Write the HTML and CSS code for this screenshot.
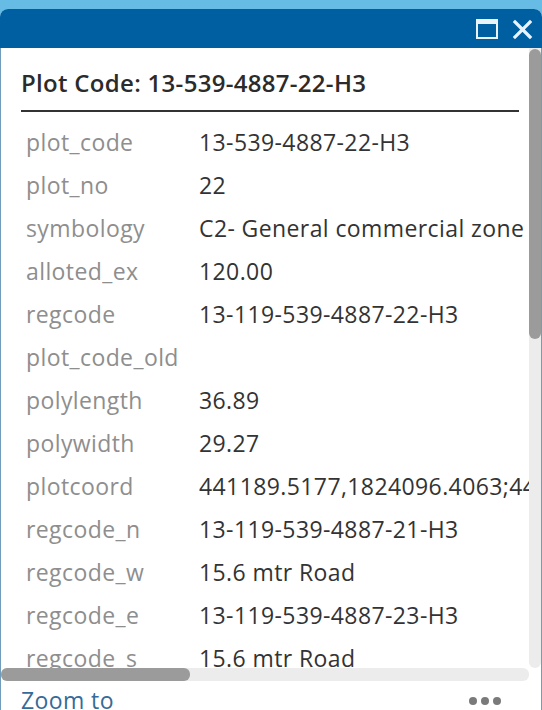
FILE: index.html
```html
<!DOCTYPE html>
<html lang="en">
<head>
<meta charset="utf-8">
<title>Plot Code popup</title>
<link rel="stylesheet" href="styles.css">
</head>
<body>
<div class="popup">
  <div class="header">
    <svg class="icon-max" width="22" height="20" viewBox="0 0 22 20">
      <rect x="1" y="1" width="20" height="18" fill="none" stroke="#eaf2fa" stroke-width="2"/>
      <rect x="1" y="1" width="20" height="4" fill="#eaf2fa"/>
    </svg>
    <svg class="icon-close" width="21" height="21" viewBox="0 0 21 21">
      <path d="M3 3 L18 18 M18 3 L3 18" stroke="#eaf2fa" stroke-width="3.2" stroke-linecap="square"/>
    </svg>
  </div>
  <div class="body">
    <div class="content">
      <h2 class="title">Plot Code: 13-539-4887-22-H3</h2>
      <div class="attrs">
        <div class="row"><span class="label">plot_code</span><span class="value">13-539-4887-22-H3</span></div>
        <div class="row"><span class="label">plot_no</span><span class="value">22</span></div>
        <div class="row"><span class="label">symbology</span><span class="value">C2- General commercial zone</span></div>
        <div class="row"><span class="label">alloted_ex</span><span class="value">120.00</span></div>
        <div class="row"><span class="label">regcode</span><span class="value">13-119-539-4887-22-H3</span></div>
        <div class="row"><span class="label">plot_code_old</span><span class="value"></span></div>
        <div class="row"><span class="label">polylength</span><span class="value">36.89</span></div>
        <div class="row"><span class="label">polywidth</span><span class="value">29.27</span></div>
        <div class="row"><span class="label">plotcoord</span><span class="value">441189.5177,1824096.4063;441201.2233,1824110.9981</span></div>
        <div class="row"><span class="label">regcode_n</span><span class="value">13-119-539-4887-21-H3</span></div>
        <div class="row"><span class="label">regcode_w</span><span class="value">15.6 mtr Road</span></div>
        <div class="row"><span class="label">regcode_e</span><span class="value">13-119-539-4887-23-H3</span></div>
        <div class="row"><span class="label">regcode_s</span><span class="value">15.6 mtr Road</span></div>
      </div>
    </div>
    <div class="vscroll"><div class="vthumb"></div></div>
    <div class="hscroll"><div class="hthumb"></div></div>
    <div class="corner"></div>
  </div>
  <div class="footer">
    <span class="zoom">Zoom to</span>
    <span class="dots"><i></i><i></i><i></i></span>
  </div>
</div>
</body>
</html>
```
FILE: styles.css
```css
html, body {
  margin: 0;
  padding: 0;
  height: 100%;
}
body {
  background: linear-gradient(#66bce4, #4fa9d6);
  font-family: "Open Sans", Lato, sans-serif;
  overflow: hidden;
}
.popup {
  margin-top: 9px;
  height: 701px;
  background: #fff;
  border-radius: 8px 8px 0 0;
  overflow: hidden;
  display: flex;
  flex-direction: column;
}
.header {
  height: 39px;
  flex: none;
  background: #005fa1;
  display: flex;
  justify-content: flex-end;
  align-items: center;
  gap: 14px;
  padding-right: 9px;
}
.icon-max { display: block; margin-top: 1px; }
.icon-close { display: block; margin-top: 1px; }
.body {
  display: grid;
  grid-template-columns: 1fr 12px;
  grid-template-rows: 620px 13px;
  border-left: 1px solid #6f9dbb;
  border-right: 1px solid #6f9dbb;
  flex: none;
}
.content {
  overflow: hidden;
  padding: 23px 0 0 20px;
}
.title {
  margin: 0 10px 0 0;
  font-size: 24px;
  font-weight: 600;
  letter-spacing: 0.3px;
  line-height: 24px;
  color: #2b2b2b;
  padding-bottom: 15px;
  border-bottom: 2px solid #333;
  white-space: nowrap;
}
.attrs {
  margin-top: 9px;
}
.row {
  display: flex;
  height: 43px;
  line-height: 43px;
  font-size: 23px;
  letter-spacing: 0.4px;
  white-space: nowrap;
}
.label {
  flex: none;
  width: 173px;
  padding-left: 5px;
  color: #8e8e8e;
}
.value {
  color: #333;
}
.vscroll {
  background: #ececec;
  border-radius: 0 0 6px 6px;
}
.vthumb {
  height: 290px;
  margin-top: 1px;
  background: #9b9b9b;
  border-radius: 6px;
}
.hscroll {
  background: #ececec;
  border-radius: 6px;
  display: flex;
}
.hthumb {
  width: 189px;
  background: #9b9b9b;
  border-radius: 6px;
}
.corner { background: #fff; }
.footer {
  flex: none;
  display: flex;
  justify-content: space-between;
  align-items: center;
  padding: 5px 40px 0 20px;
  height: 28px;
  border-left: 1px solid #6f9dbb;
  border-right: 1px solid #6f9dbb;
}
.zoom {
  font-size: 23px;
  letter-spacing: 0.4px;
  line-height: 28px;
  color: #356b98;
}
.dots {
  display: flex;
  gap: 4px;
  margin-top: 2px;
}
.dots i {
  display: block;
  width: 8px;
  height: 8px;
  border-radius: 50%;
  background: #7a7a7a;
}
```
